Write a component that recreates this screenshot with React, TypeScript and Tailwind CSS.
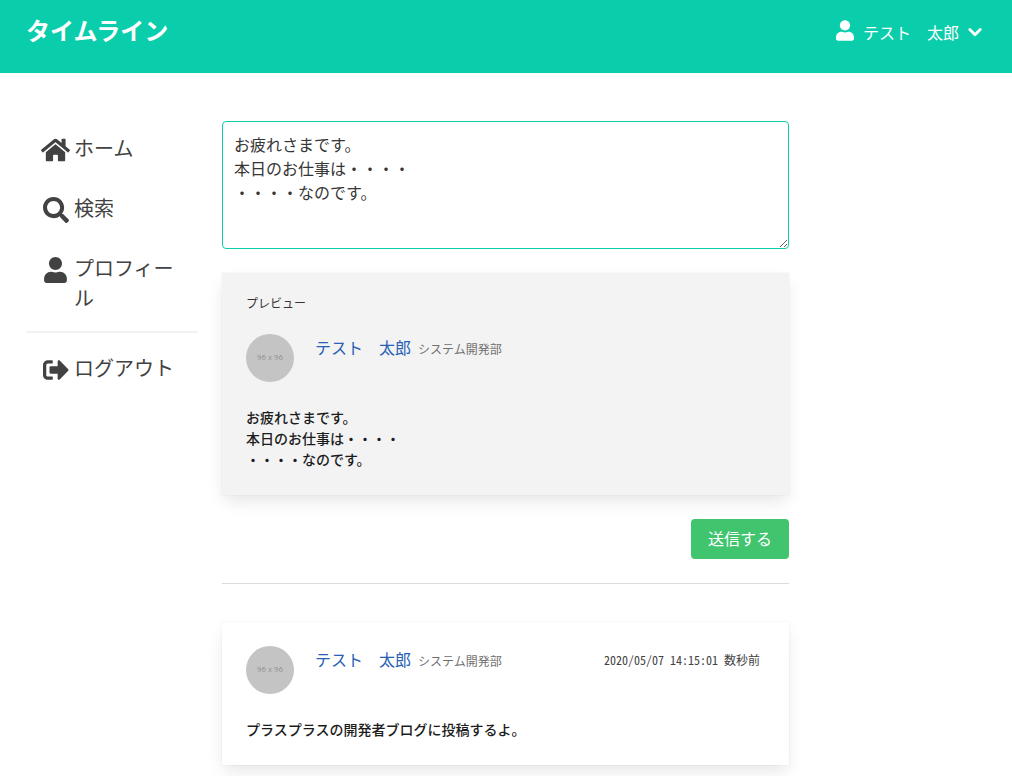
import { useState } from "react";
import type { ReactNode } from "react";
import { FaHome, FaSearch, FaSignOutAlt, FaUser } from "react-icons/fa";

const initialDraft = "お疲れさまです。\n本日のお仕事は・・・・\n・・・・なのです。";

function MenuItem({ icon, children }: { icon: ReactNode; children: ReactNode }) {
  return (
    <li>
      <a href="#" className="flex items-start gap-1 px-[15px] py-2.5 text-xl leading-[30px] text-[#424242]">
        <span className="flex h-[30px] w-[29px] shrink-0 items-end justify-center">{icon}</span>
        <span className="min-w-0 break-all">{children}</span>
      </a>
    </li>
  );
}

function Avatar() {
  return (
    <span className="flex size-12 shrink-0 items-center justify-center rounded-full bg-[#c4c4c4] font-[Roboto,sans-serif] text-[8px] text-[#969696]">
      96 x 96
    </span>
  );
}

type PostProps = { label?: string; time?: string; body: string; tone: string };

function Post({ label, time, body, tone }: PostProps) {
  return (
    <article
      className={`p-6 shadow-[0_8px_16px_-2px_rgba(10,10,10,0.1),0_0_0_1px_rgba(10,10,10,0.02)] ${tone}`}
    >
      {label && <p className="mb-[25px] text-xs leading-3 text-[#363636]">{label}</p>}
      <header className="flex items-start">
        <Avatar />
        <div className="ml-[21px] flex flex-1 items-baseline gap-[7px] leading-[26px]">
          <a href="#" className="text-base leading-[26px] text-[#2860b4]">テスト　太郎</a>
          <span className="text-xs leading-[26px] text-[#707070]">システム開発部</span>
        </div>
        {time && (
          <time className="mr-[5px] text-xs leading-7 text-[#424242] [font-feature-settings:'hwid']">{time}</time>
        )}
      </header>
      <p className="mt-[25px] mb-px text-sm leading-[21px] font-medium whitespace-pre-line text-[#1c1c1c]">{body}</p>
    </article>
  );
}

export default function App() {
  const [draft, setDraft] = useState(initialDraft);

  return (
    <div lang="ja" className="min-h-screen bg-white font-['Noto_Sans_CJK_JP',sans-serif] text-[#4a4a4a]">
      <header className="flex h-[73px] items-start justify-between bg-[#0acdac] px-[26px] text-white">
        <h1 className="pt-3 text-2xl leading-9 font-bold">タイムライン</h1>
        <button type="button" className="mr-1 flex items-center pt-[18px] text-base leading-7">
          <FaUser className="mb-1 h-[21px] w-[18px]" aria-hidden />
          <span className="ml-[9px]">テスト　太郎</span>
          <svg viewBox="0 0 14 10" className="ml-[9px] h-2.5 w-3.5" aria-hidden>
            <path d="M1.8 2.6 L7 7.8 L12.2 2.6" fill="none" stroke="currentColor" strokeWidth="2.8" strokeLinecap="round" strokeLinejoin="round" />
          </svg>
        </button>
      </header>

      <div className="flex pt-12 pr-3.5 pb-3 pl-[13px]">
        <aside className="w-1/5 pt-0.5 pr-3 pl-[13px]">
          <nav>
            <ul className="flex flex-col gap-2.5">
              <MenuItem icon={<FaHome className="h-[26px] w-[29px]" />}>ホーム</MenuItem>
              <MenuItem icon={<FaSearch className="size-[26px]" />}>検索</MenuItem>
              <MenuItem icon={<FaUser className="h-[26px] w-[23px]" />}>プロフィール</MenuItem>
            </ul>
            <hr className="my-2 mb-2.5 border-t-2 border-[#f2f2f2]" />
            <ul>
              <MenuItem icon={<FaSignOutAlt className="size-[26px]" />}>ログアウト</MenuItem>
            </ul>
          </nav>
        </aside>

        <main className="w-3/5 px-3">
          <form onSubmit={(e) => e.preventDefault()}>
            <textarea
              aria-label="投稿内容"
              rows={4}
              value={draft}
              onChange={(e) => setDraft(e.target.value)}
              className="block h-32 w-full resize-y rounded border border-[#0bceac] bg-white px-[11px] py-2.5 text-base leading-6 text-[#363636] outline-none"
            />
            <div className="mt-6">
              <Post label="プレビュー" body={draft} tone="bg-[#f3f3f3]" />
            </div>
            <div className="mt-6 flex justify-end">
              <button type="submit" className="h-10 rounded bg-[#40c46e] px-[17px] pb-0.5 text-base text-white">
                送信する
              </button>
            </div>
          </form>
          <hr className="mt-6 mb-[38px] border-t border-[#dbdbdb]" />
          <Post time="2020/05/07 14:15:01 数秒前" body="プラスプラスの開発者ブログに投稿するよ。" tone="bg-white" />
        </main>
      </div>
    </div>
  );
}
